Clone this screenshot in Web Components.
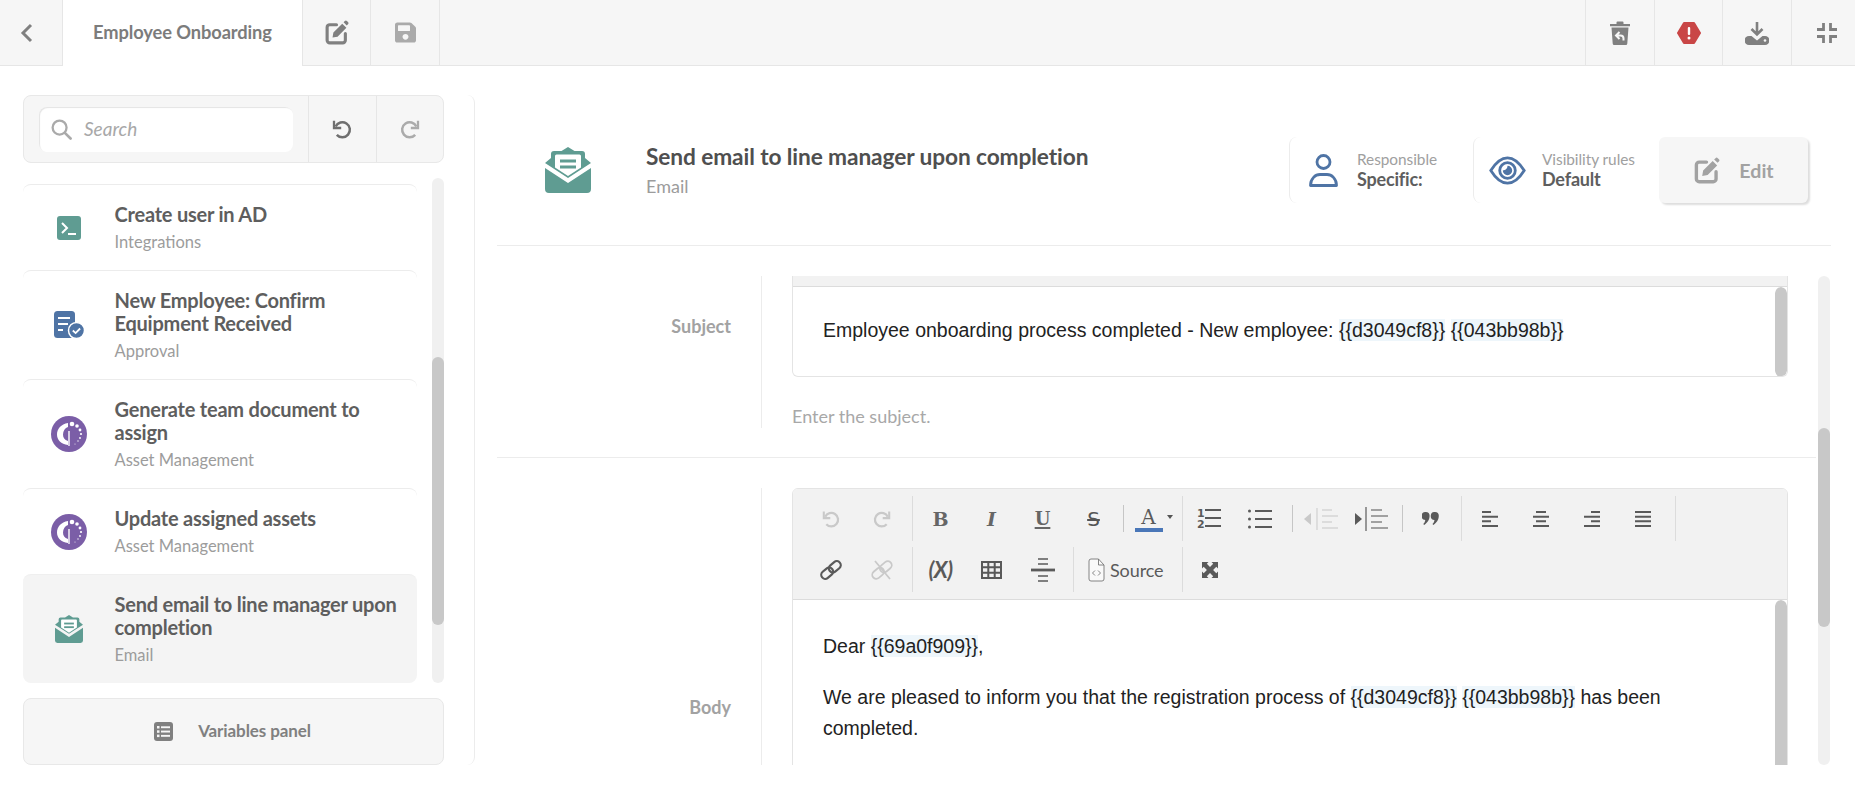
<!DOCTYPE html>
<html lang="en">
<head>
<meta charset="utf-8">
<title>Employee Onboarding</title>
<style>
  html, body { margin: 0; height: 100%; background: #fff; overflow: hidden; }
  body { font-family: Lato, "Open Sans", sans-serif; }
</style>
</head>
<body>
<app-shell>
  <top-bar slot="top"></top-bar>
  <side-panel slot="side">
    <task-item icon="terminal" label="Create user in AD" sub="Integrations" h="86"></task-item>
    <task-item icon="approval" label="New Employee: Confirm Equipment Received" sub="Approval" h="109"></task-item>
    <task-item icon="logo" label="Generate team document to assign" sub="Asset Management" h="109"></task-item>
    <task-item icon="logo" label="Update assigned assets" sub="Asset Management" h="86"></task-item>
    <task-item icon="email" label="Send email to line manager upon completion" sub="Email" h="109" selected></task-item>
  </side-panel>
  <detail-panel slot="main">
    <form-row label="Subject" hint="Enter the subject."><subject-editor></subject-editor></form-row>
    <form-row label="Body" last><body-editor></body-editor></form-row>
  </detail-panel>
</app-shell>

<script>
// iconos dibujados a mano: [viewBox, contenido]
const ICONS = {
  back: ["0 0 13 20", `<path d="M11 2 3 10l8 8" fill="none" stroke="currentColor" stroke-width="3"/>`],
  edit: ["0 0 24 24", `<path d="M12 4.5H5.5A2.5 2.5 0 0 0 3 7v12.5A2.5 2.5 0 0 0 5.500 22H18a2.500 2.500 0 0 0 2.500-2.500V13" fill="none" stroke="currentColor" stroke-width="3" stroke-linecap="round"/><path d="M9 12 17.500 3.500l4 4L13 16l-4.800.800zM18.800 2.200 20 1a1.400 1.400 0 0 1 2 0l1 1a1.400 1.400 0 0 1 0 2l-1.200 1.200z" fill="currentColor"/>`],
  save: ["0 0 448 512", `<path fill="currentColor" d="M433.941 129.941l-83.882-83.882A48 48 0 0 0 316.118 32H48C21.49 32 0 53.49 0 80v352c0 26.51 21.49 48 48 48h352c26.51 0 48-21.49 48-48V163.882a48 48 0 0 0-14.059-33.941zM224 416c-35.346 0-64-28.654-64-64 0-35.346 28.654-64 64-64s64 28.654 64 64c0 35.346-28.654 64-64 64zm96-304.520V212c0 6.627-5.373 12-12 12H76c-6.627 0-12-5.373-12-12V108c0-6.627 5.373-12 12-12h228.520c3.183 0 6.235 1.264 8.485 3.515l3.480 3.480A11.996 11.996 0 0 1 320 111.480z"/>`],
  trash: ["0 0 20 24", `<path fill="currentColor" d="M0 3h6.500V1.500A1 1 0 0 1 7.500.500h5a1 1 0 0 1 1 1V3H20v2.200H0zM1.500 6.500h17L17.300 22.500a1.500 1.500 0 0 1-1.500 1.500H4.200a1.500 1.500 0 0 1-1.500-1.500z"/><path d="M13.500 19.500v-2a3 3 0 0 0-3-3H6.500M9.500 11 6 14.500 9.500 18" fill="none" stroke="#f6f6f6" stroke-width="2"/>`],
  alert: ["0 0 24 22", `<path fill="#c94646" stroke="#c94646" stroke-width="2" stroke-linejoin="round" d="M7 1h10l6 10-6 10H7L1 11z"/><rect x="10.800" y="5" width="2.400" height="8" rx="1" fill="#fff"/><circle cx="12" cy="16" r="1.500" fill="#fff"/>`],
  download: ["0 0 24 24", `<path d="M12 1v12M6.500 8l5.500 5.500L17.500 8" fill="none" stroke="currentColor" stroke-width="2.600"/><path fill="currentColor" d="M4 15h2.500l5.500 4.500 5.500-4.500H20a4 4 0 0 1 0 9H4a4 4 0 0 1 0-9z"/><circle cx="20" cy="19.500" r="1.300" fill="#f6f6f6"/>`],
  compress: ["0 0 20 20", `<path d="M6.500 0v6.500H0M13.500 0v6.500H20M6.500 20v-6.500H0M13.500 20v-6.500H20" fill="none" stroke="currentColor" stroke-width="2.800"/>`],
  search: ["0 0 22 22", `<circle cx="9" cy="9" r="7.300" fill="none" stroke="currentColor" stroke-width="2.400"/><path d="M14.500 14.500 20.500 20.500" stroke="currentColor" stroke-width="2.800" stroke-linecap="round"/>`],
  undo: ["0 0 20 20", `<path d="M3.600 7.500A7.500 7.500 0 1 1 4.800 15.800" fill="none" stroke="currentColor" stroke-width="2.500"/><path d="M2 1.800V9h7.200" fill="none" stroke="currentColor" stroke-width="2.300"/>`],
  redo: ["0 0 20 20", `<g transform="matrix(-1 0 0 1 20 0)"><path d="M3.600 7.500A7.500 7.500 0 1 1 4.800 15.800" fill="none" stroke="currentColor" stroke-width="2.500"/><path d="M2 1.800V9h7.200" fill="none" stroke="currentColor" stroke-width="2.300"/></g>`],
  terminal: ["0 0 24 24", `<rect width="24" height="24" rx="3" fill="#5f9c92"/><path d="M5 7l5 5-5 5" fill="none" stroke="#fff" stroke-width="2"/><path d="M11 18h8" stroke="#fff" stroke-width="2"/>`],
  approval: ["0 0 31 28", `<rect width="21" height="27" rx="3.500" fill="#4f74a5"/><path d="M4 7h12M4 13h10M4 19h5" stroke="#fff" stroke-width="2"/><circle cx="22.500" cy="19.500" r="8" fill="#4f74a5" stroke="#fff" stroke-width="1.500"/><path d="M18.800 19.500l2.800 2.600 4.500-4.600" fill="none" stroke="#fff" stroke-width="1.800"/>`],
  logo: ["0 0 36 36", `<circle cx="18" cy="18" r="18" fill="#7b5ea7"/><path fill="#fff" d="M17 7C10 8 6 13 6 18.500 6 24 10 28 17 29v-4c-3.500-1-5-3.500-5-6.500 0-3.500 2-6.500 5-7.500z"/><path d="M18 15v15" stroke="#fff" stroke-width="1.400"/><g fill="#fff"><circle cx="21" cy="8" r="2.300"/><circle cx="26" cy="10" r="1.800"/><circle cx="29" cy="14" r="1.400"/><circle cx="30" cy="18" r="1.100"/><circle cx="29" cy="22" r=".9"/><circle cx="27" cy="25" r=".7"/><circle cx="24" cy="28" r=".5"/></g>`],
  email: ["0 0 46 46", `<path fill="#5f9c92" d="M23 0l6.500 4H37a3 3 0 0 1 3 3v4l6 5-23 15L0 16l6-5V7a3 3 0 0 1 3-3h7.500z"/><path fill="#fff" d="M10 9a1.500 1.500 0 0 1 1.500-1.500h23A1.500 1.500 0 0 1 36 9v11.500L23 29 10 20.500z"/><rect x="15" y="12.500" width="16" height="3" fill="#5f9c92"/><rect x="15" y="18.500" width="16" height="3" fill="#5f9c92"/><path fill="#5f9c92" d="M0 21l23 15 23-15v21a4 4 0 0 1-4 4H4a4 4 0 0 1-4-4z"/>`],
  person: ["0 0 29 33", `<circle cx="14.500" cy="8" r="6.500" fill="none" stroke="currentColor" stroke-width="2.800"/><path d="M1.500 31.500C1.500 24.500 6.500 20.500 11 20.500H18C22.500 20.500 27.500 24.500 27.500 31.500Z" fill="none" stroke="currentColor" stroke-width="2.800" stroke-linejoin="round"/>`],
  eye: ["0 0 37 29", `<path d="M1.800 14.500C8 4.500 14 1.800 18.500 1.800S29 4.500 35.200 14.500C29 24.500 23 27.200 18.500 27.200S8 24.500 1.800 14.500Z" fill="none" stroke="currentColor" stroke-width="2.800"/><circle cx="18.500" cy="14.500" r="7.800" fill="none" stroke="currentColor" stroke-width="2.800"/><path d="M18.500 9.800a4.700 4.700 0 1 1-4.700 4.700c2.600 0 4.700-2 4.700-4.700z" fill="currentColor"/>`],
  listalt: ["0 0 19 19", `<rect width="19" height="19" rx="3" fill="currentColor"/><g fill="#f6f6f6"><rect x="3" y="4" width="2.500" height="2.500"/><rect x="3" y="8.300" width="2.500" height="2.500"/><rect x="3" y="12.600" width="2.500" height="2.500"/><rect x="7" y="4.300" width="9" height="1.900"/><rect x="7" y="8.600" width="9" height="1.900"/><rect x="7" y="12.900" width="9" height="1.900"/></g>`],
  numlist: ["0 -2 24 28", `<text x="0" y="9.500" font-family="DejaVu Sans" font-weight="700" font-size="11" fill="currentColor">1</text><text x="0" y="21" font-family="DejaVu Sans" font-weight="700" font-size="11" fill="currentColor">2</text><path d="M8 3h16M8 11h16M8 19h16" stroke="currentColor" stroke-width="2"/>`],
  bullist: ["0 0 24 20", `<path d="M7 2h17M7 10h17M7 18h17" stroke="currentColor" stroke-width="2"/><circle cx="1.500" cy="2" r="1.500" fill="currentColor"/><circle cx="1.500" cy="10" r="1.500" fill="currentColor"/><circle cx="1.500" cy="18" r="1.500" fill="currentColor"/>`],
  outdent: ["0 0 34 22", `<path d="M7 5v12L0 11z" fill="currentColor"/><path d="M13 0v22" stroke="currentColor" stroke-width="1"/><path d="M18 2h10M18 8h16M18 14h10M18 20h16" stroke="currentColor" stroke-width="1.400" opacity=".7"/>`],
  indent: ["0 0 34 24", `<path d="M0 6v12l7-6z" fill="currentColor"/><path d="M11 0v24" stroke="currentColor" stroke-width="1.200"/><path d="M16 3h11M16 9h17M16 15h11M16 21h17" stroke="currentColor" stroke-width="1.400" opacity=".7"/>`],
  quote: ["0 0 17 13", `<path fill="currentColor" d="M3.800 0a3.800 3.800 0 0 1 3.800 3.800c0 4-2.500 7.500-5.500 9.200L1.300 12c1-1 1.700-2 2-4A3.900 3.900 0 0 1 3.800 0zM13 0a3.800 3.800 0 0 1 3.800 3.800c0 4-2.500 7.500-5.500 9.200l-.8-1c1-1 1.700-2 2-4A3.900 3.900 0 0 1 13 0z"/>`],
  alignleft: ["0 0 16 16", `<path d="M0 1h9M0 5.700h16M0 10.300h9M0 15h16" stroke="currentColor" stroke-width="2"/>`],
  aligncenter: ["0 0 16 16", `<path d="M3 1h10M0 5.700h16M3 10.300h10M0 15h16" stroke="currentColor" stroke-width="2"/>`],
  alignright: ["0 0 16 16", `<path d="M7 1h9M0 5.700h16M7 10.300h9M0 15h16" stroke="currentColor" stroke-width="2"/>`],
  justify: ["0 0 16 16", `<path d="M0 1h16M0 5.700h16M0 10.300h16M0 15h16" stroke="currentColor" stroke-width="2"/>`],
  link: ["0 0 22 20", `<g fill="none" stroke="currentColor" stroke-width="2.200" transform="rotate(-40 11 10)"><rect x="-.5" y="6" width="13" height="8" rx="4"/><rect x="9.500" y="6" width="13" height="8" rx="4"/></g>`],
  unlink: ["0 0 22 20", `<g fill="none" stroke="currentColor" stroke-width="1.800" transform="rotate(-40 11 10)"><rect x="-.5" y="6" width="13" height="8" rx="4"/><rect x="9.500" y="6" width="13" height="8" rx="4"/></g><path d="M4 1l15 18" stroke="currentColor" stroke-width="1.800"/>`],
  table: ["0 0 21 18", `<path fill="none" stroke="currentColor" stroke-width="2" d="M1 1h19v16H1zM7.300 1v16M13.700 1v16M1 6.300h19M1 11.700h19"/>`],
  hr: ["0 0 24 24", `<path d="M7 1h10M7 6h10M7 18h10M7 23h10" stroke="currentColor" stroke-width="1.600"/><path d="M0 12h24" stroke="currentColor" stroke-width="2.800"/>`],
  source: ["0 0 17 24", `<path d="M1 3a2 2 0 0 1 2-2h7.500L16 7v14a2 2 0 0 1-2 2H3a2 2 0 0 1-2-2z" fill="#fff" fill-opacity=".5" stroke="#777" stroke-width=".9"/><path d="M10.500 1v6H16" fill="none" stroke="#777" stroke-width=".9"/><path d="M7 12.500 4.500 15 7 17.500M10 12.500l2.500 2.500L10 17.500" fill="none" stroke="#777" stroke-width=".9"/>`],
  maximize: ["0 0 16 16", `<path fill="currentColor" d="M0 0h6.500L4.800 1.700 8 4.900l3.200-3.200L9.500 0H16v6.500l-1.700-1.700L11.100 8l3.200 3.200 1.700-1.700V16H9.500l1.700-1.700L8 11.100l-3.200 3.200L6.500 16H0V9.500l1.700 1.700L4.900 8 1.700 4.800 0 6.500z"/>`],
};

class UiIcon extends HTMLElement {
  constructor() {
    super();
    this.attachShadow({ mode: "open" });
  }
  connectedCallback() {
    const [vb, body] = ICONS[this.getAttribute("name")];
    const w = this.getAttribute("w");
    const h = this.getAttribute("h") || w;
    this.shadowRoot.innerHTML = `
      <style>
      :host { display: inline-flex; flex: none; line-height: 0; color: ${this.getAttribute("color") || "inherit"}; }
      </style>
      <svg viewBox="${vb}" width="${w}" height="${h}" preserveAspectRatio="none">${body}</svg>`;
  }
}

class AppShell extends HTMLElement {
  constructor() {
    super();
    this.attachShadow({ mode: "open" });
    this.shadowRoot.innerHTML = `
      <style>
      :host { display: flex; flex-direction: column; height: 793px; width: 1855px; overflow: hidden; }
      .body { display: flex; flex: 1; min-height: 0; padding: 29px 0 28px; }
      </style>
      <slot name="top"></slot>
      <div class="body">
        <slot name="side"></slot>
        <slot name="main"></slot>
      </div>`;
  }
}

class TopBar extends HTMLElement {
  constructor() {
    super();
    this.attachShadow({ mode: "open" });
    this.shadowRoot.innerHTML = `
      <style>
      :host { display: flex; height: 65px; flex: none; background: #f6f6f6; border-bottom: 1px solid #e6e6e6; color: #808080; }
      .cell { display: flex; align-items: center; justify-content: center; box-sizing: border-box; border-right: 1px solid #e6e6e6; }
      .back { width: 63px; padding-right: 10px; }
      .tab { width: 240px; height: 66px; background: #fff; font-size: 18.3px; font-weight: 700; letter-spacing: -.1px; color: #7c7c7c; padding-bottom: 3px; }
      .edit { width: 68px; }
      .save { width: 69px; color: #aaa; }
      .spacer { flex: 1; }
      .end { width: 69px; border-right: 0; border-left: 1px solid #e6e6e6; }
      .end.mid { width: 68px; }
      .end.last { width: 64px; padding-left: 6px; }
      </style>
      <div class="cell back"><ui-icon name="back" w="13" h="20"></ui-icon></div>
      <div class="cell tab">Employee Onboarding</div>
      <div class="cell edit"><ui-icon name="edit" w="25"></ui-icon></div>
      <div class="cell save"><ui-icon name="save" w="21" h="23"></ui-icon></div>
      <div class="spacer"></div>
      <div class="cell end"><ui-icon name="trash" w="20" h="24"></ui-icon></div>
      <div class="cell end mid"><ui-icon name="alert" w="24" h="22"></ui-icon></div>
      <div class="cell end"><ui-icon name="download" w="24"></ui-icon></div>
      <div class="cell end last"><ui-icon name="compress" w="20"></ui-icon></div>`;
  }
}

class FakeScroll extends HTMLElement {
  constructor() {
    super();
    this.attachShadow({ mode: "open" });
  }
  connectedCallback() {
    this.shadowRoot.innerHTML = `
      <style>
      :host { display: block; flex: none; width: 12px; background: var(--track, #f0f0f0); border-radius: 6px; overflow: hidden; }
      div { background: #c8c8c8; border-radius: 6px; margin-top: ${this.getAttribute("top") || 0}px; height: ${this.getAttribute("size")}; }
      </style>
      <div></div>`;
  }
}

class SidePanel extends HTMLElement {
  constructor() {
    super();
    this.attachShadow({ mode: "open" });
    this.shadowRoot.innerHTML = `
      <style>
      :host { display: flex; flex-direction: column; flex: none; box-sizing: border-box; width: 475px; padding: 0 30px 0 23px; border-right: 1px solid #ececec; border-radius: 0 8px 8px 0; }
      .tools { display: flex; height: 68px; flex: none; box-sizing: border-box; background: #f6f6f6; border: 1px solid #e8e8e8; border-radius: 8px; color: #6f6f6f; }
      .search { flex: 1; padding: 11px 15px; border-right: 1px solid #e6e6e6; }
      .box { display: flex; align-items: center; gap: 12px; box-sizing: border-box; height: 45px; width: 254px; padding-left: 12px; background: #fff; border-radius: 8px; box-shadow: inset 1px 1px 1px #e4e4e4; font-size: 19px; font-style: italic; color: #a8a8a8; }
      .box span { padding-bottom: 2px; }
      .act { display: flex; align-items: center; justify-content: center; width: 67px; }
      .act + .act { border-left: 1px solid #e6e6e6; color: #ababab; }
      .list { display: flex; flex: 1; min-height: 0; gap: 15px; margin: 15px 0; }
      .items { flex: 1; padding-top: 6px; }
      .vars { display: flex; align-items: center; justify-content: center; gap: 25px; height: 67px; flex: none; box-sizing: border-box; background: #f6f6f6; border: 1px solid #e8e8e8; border-radius: 8px; color: #808080; font-size: 17px; font-weight: 700; letter-spacing: -.1px; padding: 0 2px 2px 0; }
      .vars ui-icon { margin-top: 2px; }
      </style>
      <div class="tools">
        <div class="search"><div class="box"><ui-icon name="search" w="21" color="#aaa"></ui-icon><span>Search</span></div></div>
        <div class="act"><ui-icon name="undo" w="20"></ui-icon></div>
        <div class="act"><ui-icon name="redo" w="20"></ui-icon></div>
      </div>
      <div class="list">
        <div class="items"><slot></slot></div>
        <fake-scroll top="179" size="268px"></fake-scroll>
      </div>
      <div class="vars"><ui-icon name="listalt" w="19"></ui-icon><span>Variables panel</span></div>`;
  }
}

class TaskItem extends HTMLElement {
  constructor() {
    super();
    this.attachShadow({ mode: "open" });
  }
  connectedCallback() {
    const icon = this.getAttribute("icon");
    const size = { terminal: [24, 24], approval: [31, 28], logo: [36, 36], email: [28, 28] }[icon];
    this.shadowRoot.innerHTML = `
      <style>
      :host { display: flex; align-items: center; box-sizing: border-box; height: ${this.getAttribute("h")}px; border-top: 1px solid #ececec; border-radius: 8px 8px 0 0; padding-top: 4px; }
      :host([selected]) { background: #f4f4f4; border-radius: 8px; border-top-color: #efefef; }
      .icon { display: flex; justify-content: center; flex: none; width: 92px; margin-top: -4px; }
      .text { margin-left: -.5px; }
      .label { font-size: 20px; line-height: 23px; font-weight: 700; color: #5e5e5e; letter-spacing: -.22px; }
      .sub { font-size: 16.5px; line-height: 28px; margin-top: 2px; color: #9c9c9c; }
      </style>
      <div class="icon"><ui-icon name="${icon}" w="${size[0]}" h="${size[1]}"></ui-icon></div>
      <div class="text">
        <div class="label">${this.getAttribute("label")}</div>
        <div class="sub">${this.getAttribute("sub")}</div>
      </div>`;
  }
}

class InfoChip extends HTMLElement {
  constructor() {
    super();
    this.attachShadow({ mode: "open" });
  }
  connectedCallback() {
    const eye = this.getAttribute("icon") === "eye";
    this.shadowRoot.innerHTML = `
      <style>
      :host { display: flex; align-items: center; box-sizing: border-box; height: 66px; border-left: 1px solid #ececec; border-radius: 8px 0 0 8px; }
      .icon { display: flex; justify-content: center; flex: none; width: 67px; color: #4f74a5; }
      .text { padding: 0 0 2px ${eye ? 1 : 0}px; }
      .top { font-size: 15.4px; line-height: 19px; color: #a0a0a0; letter-spacing: -.05px; }
      .val { font-size: 18px; line-height: 20px; font-weight: 700; color: #5e5e5e; letter-spacing: -.2px; }
      </style>
      <div class="icon"><ui-icon name="${eye ? "eye" : "person"}" w="${eye ? 37 : 29}" h="${eye ? 29 : 33}"></ui-icon></div>
      <div class="text">
        <div class="top">${this.getAttribute("top")}</div>
        <div class="val">${this.getAttribute("val")}</div>
      </div>`;
  }
}

class DetailPanel extends HTMLElement {
  constructor() {
    super();
    this.attachShadow({ mode: "open" });
    this.shadowRoot.innerHTML = `
      <style>
      :host { display: flex; flex-direction: column; flex: 1; min-width: 0; box-sizing: border-box; padding: 0 24px 0 22px; }
      .head { display: flex; align-items: center; flex: none; height: 150px; box-sizing: content-box; padding-right: 23px; border-bottom: 1px solid #ececec; }
      .mark { flex: none; width: 149px; padding-left: 48px; box-sizing: border-box; line-height: 0; }
      .title { flex: 1; padding-top: 2px; }
      h1 { margin: 0; font-size: 22.7px; line-height: 26px; font-weight: 700; color: #4f4f4f; letter-spacing: -.1px; }
      .kind { font-size: 18px; line-height: 24px; margin-top: 4px; color: #9c9c9c; }
      .w1 { width: 184px; }
      .w2 { width: 186px; }
      .edit { display: flex; align-items: center; justify-content: center; gap: 19px; width: 149px; height: 66px; background: #f6f6f6; border-radius: 6px; box-shadow: 2px 2px 2px #dedede; color: #a2a2a2; font-size: 19.6px; font-weight: 700; }
      .wrap { display: flex; flex: 1; min-height: 0; margin-top: 30px; gap: 2px; padding-right: 1px; }
      .scroll { flex: 1; min-width: 0; overflow: hidden; }
      </style>
      <div class="head">
        <div class="mark"><ui-icon name="email" w="46"></ui-icon></div>
        <div class="title">
          <h1>Send email to line manager upon completion</h1>
          <div class="kind">Email</div>
        </div>
        <info-chip class="w1" icon="person" top="Responsible" val="Specific:"></info-chip>
        <info-chip class="w2" icon="eye" top="Visibility rules" val="Default"></info-chip>
        <div class="edit"><ui-icon name="edit" w="27"></ui-icon><span>Edit</span></div>
      </div>
      <div class="wrap">
        <div class="scroll"><slot></slot></div>
        <fake-scroll top="152" size="199px"></fake-scroll>
      </div>`;
  }
}

class FormRow extends HTMLElement {
  constructor() {
    super();
    this.attachShadow({ mode: "open" });
  }
  connectedCallback() {
    const hint = this.getAttribute("hint");
    this.shadowRoot.innerHTML = `
      <style>
      :host { display: block; padding-bottom: 29px; margin-bottom: 30px; border-bottom: 1px solid #ececec; }
      :host([last]) { border-bottom: 0; margin-bottom: 0; }
      .row { display: flex; }
      .label { display: flex; align-items: center; justify-content: flex-end; flex: none; width: 264px; box-sizing: border-box; padding-right: 30px; font-size: 18px; font-weight: 700; color: #a2a2a2; letter-spacing: 0; height: var(--h, 100px); }
      :host([last]) .label { --h: 438px; }
      .field { flex: 1; min-width: 0; padding: 0 28px 0 30px; border-left: 1px solid #ececec; }
      .hint { font-size: 18px; line-height: 24px; margin-top: 27px; color: #a8a8a8; }
      </style>
      <div class="row">
        <div class="label">${this.getAttribute("label")}</div>
        <div class="field"><slot></slot>${hint ? `<div class="hint">${hint}</div>` : ""}</div>
      </div>`;
  }
}

class VarTag extends HTMLElement {
  constructor() {
    super();
    this.attachShadow({ mode: "open" });
    this.shadowRoot.innerHTML = `<style>:host { display: inline; background: #eef6fb; }</style><slot></slot>`;
  }
}

class SubjectEditor extends HTMLElement {
  constructor() {
    super();
    this.attachShadow({ mode: "open" });
    this.shadowRoot.innerHTML = `
      <style>
      :host { display: block; height: 101px; box-sizing: border-box; border: 1px solid #e4e4e4; border-top: 0; border-radius: 0 0 6px 6px; overflow: hidden; }
      .strip { height: 10px; background: #f2f2f2; border-bottom: 1px solid #dcdcdc; }
      .wrap { display: flex; height: 90px; }
      .text { flex: 1; padding-left: 30px; display: flex; align-items: center; padding-bottom: 4px; font: 19.5px/30px "Liberation Sans", Arial, sans-serif; color: #222; white-space: nowrap; }
      fake-scroll { --track: #fff; border-radius: 6px; }
      </style>
      <div class="strip"></div>
      <div class="wrap">
        <div class="text"><span>Employee onboarding process completed - New employee: <var-tag>{{d3049cf8}}</var-tag> <var-tag>{{043bb98b}}</var-tag></span></div>
        <fake-scroll size="100%"></fake-scroll>
      </div>`;
  }
}

class ToolBtn extends HTMLElement {
  constructor() {
    super();
    this.attachShadow({ mode: "open" });
    this.shadowRoot.innerHTML = `
      <style>
      :host { display: flex; align-items: center; justify-content: center; flex: none; width: 51px; height: 45px; color: #5a5a5a; }
      :host([off]) { color: #c9c9c9; }
      </style>
      <slot></slot>`;
  }
}

class ToolSep extends HTMLElement {
  constructor() {
    super();
    this.attachShadow({ mode: "open" });
  }
  connectedCallback() {
    const short = this.hasAttribute("short");
    this.shadowRoot.innerHTML = `
      <style>
      :host { display: block; flex: none; width: 1px; background: ${short ? "#c6c6c6" : "#dcdcdc"}; align-self: center; height: ${short ? 27 : 45}px; margin: 0 ${this.getAttribute("r") || 0}px 0 ${this.getAttribute("l") || 0}px; }
      </style>`;
  }
}

class BodyEditor extends HTMLElement {
  constructor() {
    super();
    this.attachShadow({ mode: "open" });
    this.shadowRoot.innerHTML = `
      <style>
      :host { display: block; height: 442px; box-sizing: border-box; border: 1px solid #e4e4e4; border-radius: 6px 6px 0 0; overflow: hidden; }
      .bar { display: flex; flex-direction: column; gap: 6px; height: 111px; box-sizing: border-box; padding: 7px 0 8px 12px; background: #f2f2f2; border-bottom: 1px solid #dcdcdc; }
      .row { display: flex; }
      .g { font: 700 19px "DejaVu Serif", serif; color: #666; }
      .i { font-style: italic; }
      .u { text-decoration: underline; text-underline-offset: 2px; text-decoration-thickness: 2px; font-size: 18px; }
      .s { text-decoration: line-through; font: 400 20px "DejaVu Sans", sans-serif; color: #555; }
      .x { font: italic 700 22px Lato, sans-serif; letter-spacing: -.5px; color: #5a5a5a; }
      .color { width: 57px; gap: 4px; }
      .a { display: block; width: 28px; text-align: center; font: 400 20px/22px "DejaVu Serif", serif; border-bottom: 4px solid #4a77b8; }
      .caret { width: 0; height: 0; border: 3.5px solid transparent; border-top: 4px solid #555; border-bottom: 0; margin-top: -4px; }
      .srcbtn { width: 108px; justify-content: flex-start; padding-left: 14px; box-sizing: border-box; gap: 5px; font-size: 18px; letter-spacing: -.1px; color: #5a5a5a; }
      .content { display: flex; height: 330px; }
      .text { flex: 1; padding: 31px 0 0 30px; font: 19.5px/31px "Liberation Sans", Arial, sans-serif; color: #222; }
      p { margin: 0 0 20px; }
      fake-scroll { --track: #fff; }
      </style>
      <div class="bar">
        <div class="row">
          <tool-btn off><ui-icon name="undo" w="18"></ui-icon></tool-btn>
          <tool-btn off><ui-icon name="redo" w="18"></ui-icon></tool-btn>
          <tool-sep l="5" r="2"></tool-sep>
          <tool-btn><span class="g">B</span></tool-btn>
          <tool-btn><span class="g i">I</span></tool-btn>
          <tool-btn><span class="g u">U</span></tool-btn>
          <tool-btn><span class="s">S</span></tool-btn>
          <tool-sep short l="4" r="1"></tool-sep>
          <tool-btn class="color"><span class="a">A</span><span class="caret"></span></tool-btn>
          <tool-sep></tool-sep>
          <tool-btn><ui-icon name="numlist" w="24" h="28"></ui-icon></tool-btn>
          <tool-btn><ui-icon name="bullist" w="24" h="20"></ui-icon></tool-btn>
          <tool-sep short l="7" r="2"></tool-sep>
          <tool-btn off><ui-icon name="outdent" w="34" h="22"></ui-icon></tool-btn>
          <tool-btn><ui-icon name="indent" w="34" h="24"></ui-icon></tool-btn>
          <tool-sep short l="5" r="2"></tool-sep>
          <tool-btn><ui-icon name="quote" w="17" h="13"></ui-icon></tool-btn>
          <tool-sep l="5" r="2"></tool-sep>
          <tool-btn><ui-icon name="alignleft" w="16"></ui-icon></tool-btn>
          <tool-btn><ui-icon name="aligncenter" w="16"></ui-icon></tool-btn>
          <tool-btn><ui-icon name="alignright" w="16"></ui-icon></tool-btn>
          <tool-btn><ui-icon name="justify" w="16"></ui-icon></tool-btn>
          <tool-sep l="7"></tool-sep>
        </div>
        <div class="row">
          <tool-btn><ui-icon name="link" w="22" h="20"></ui-icon></tool-btn>
          <tool-btn off><ui-icon name="unlink" w="22" h="20"></ui-icon></tool-btn>
          <tool-sep l="5" r="2"></tool-sep>
          <tool-btn><span class="x">(X)</span></tool-btn>
          <tool-btn><ui-icon name="table" w="21" h="18"></ui-icon></tool-btn>
          <tool-btn><ui-icon name="hr" w="24" h="24"></ui-icon></tool-btn>
          <tool-sep l="5"></tool-sep>
          <tool-btn class="srcbtn"><ui-icon name="source" w="17" h="24"></ui-icon><span>Source</span></tool-btn>
          <tool-sep r="1"></tool-sep>
          <tool-btn><ui-icon name="maximize" w="16"></ui-icon></tool-btn>
        </div>
      </div>
      <div class="content">
        <div class="text">
          <p>Dear <var-tag>{{69a0f909}}</var-tag>,</p>
          <p>We are pleased to inform you that the registration process of <var-tag>{{d3049cf8}}</var-tag> <var-tag>{{043bb98b}}</var-tag> has been<br>completed.</p>
        </div>
        <fake-scroll size="100%"></fake-scroll>
      </div>`;
  }
}

customElements.define("ui-icon", UiIcon);
customElements.define("fake-scroll", FakeScroll);
customElements.define("var-tag", VarTag);
customElements.define("tool-btn", ToolBtn);
customElements.define("tool-sep", ToolSep);
customElements.define("info-chip", InfoChip);
customElements.define("task-item", TaskItem);
customElements.define("form-row", FormRow);
customElements.define("subject-editor", SubjectEditor);
customElements.define("body-editor", BodyEditor);
customElements.define("top-bar", TopBar);
customElements.define("side-panel", SidePanel);
customElements.define("detail-panel", DetailPanel);
customElements.define("app-shell", AppShell);
</script>
</body>
</html>
